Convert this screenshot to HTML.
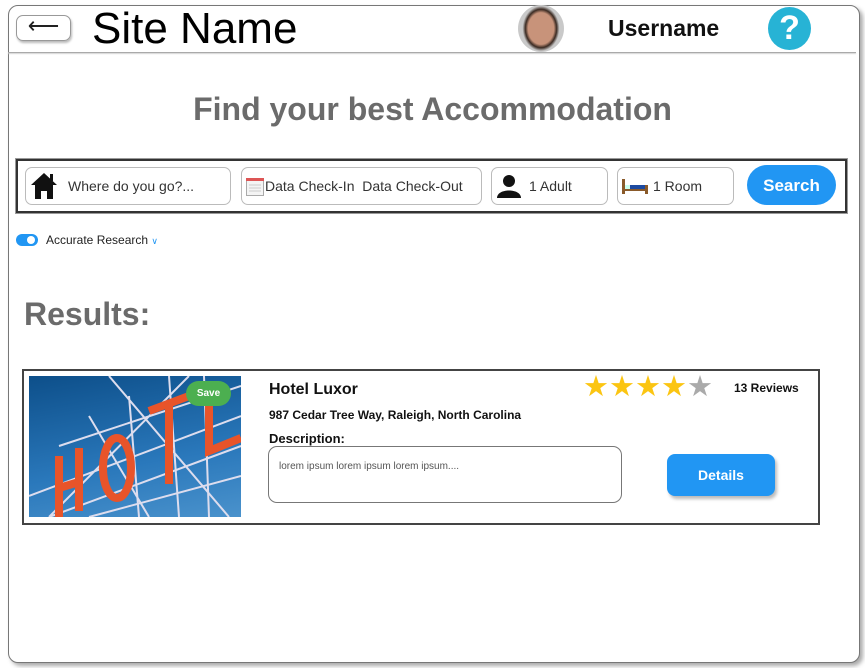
<!DOCTYPE html>
<html><head><meta charset="utf-8"><style>
*{box-sizing:border-box;margin:0;padding:0}
body{width:865px;height:668px;background:#fff;position:relative;overflow:hidden;font-family:"Liberation Sans",sans-serif}
.frame{position:absolute;left:8px;top:5px;width:852px;height:658px;border:1px solid #777;border-radius:10px;box-shadow:3px 3px 4px #aaa;background:#fff}
.abs{position:absolute}
.hline{position:absolute;left:8px;top:52px;width:848px;height:1px;background:#aaa;box-shadow:0 1px 1px #ccc}
.back{left:16px;top:15px;width:55px;height:26px;border:1px solid #999;border-radius:7px;box-shadow:1px 2px 2px #bbb;font-size:22px;line-height:20px;text-align:center;color:#222}
.field{position:absolute;top:167px;height:38px;border:1px solid #bbb;border-radius:7px;font-size:14px;color:#333;line-height:36px}
.star{font-size:29px;line-height:27px;color:#fbc512}
</style></head><body>
<div class="frame"></div>
<div class="hline"></div>
<div class="abs back">⟵</div>
<div class="abs" style="left:92px;top:4px;font-size:44px;color:#000">Site Name</div>
<div class="abs" style="left:518px;top:5px;width:46px;height:47px;border-radius:50%;background:radial-gradient(ellipse 40% 48% at 50% 50%,#c8937a 0 70%,#3a2a22 85%,#c9c9c9 100%);"></div>
<div class="abs" style="left:608px;top:15px;font-size:23px;font-weight:bold;color:#111">Username</div>
<div class="abs" style="left:768px;top:7px;width:43px;height:43px;border-radius:50%;background:#27b3d5;color:#fff;font-size:34px;font-weight:bold;text-align:center;line-height:43px">?</div>

<div class="abs" style="left:0;width:865px;top:91px;text-align:center;font-size:32px;font-weight:bold;color:#6b6b6b">Find your best Accommodation</div>

<div class="abs" style="left:16px;top:159px;width:831px;height:54px;border:2px solid #333;box-shadow:0 0 0 1px #999"></div>
<div class="field" style="left:25px;width:206px;padding-left:42px">Where do you go?...
<svg class="abs" style="left:4px;top:4px" width="28" height="27" viewBox="0 0 28 27"><path d="M14 1 L1 13 H5 V27 H11 V19 H17 V27 H23 V13 H27 Z" fill="#111"/><rect x="20" y="2" width="3" height="7" fill="#111"/></svg></div>
<div class="field" style="left:241px;width:241px;padding-left:23px">Data Check-In&nbsp; Data Check-Out
<svg class="abs" style="left:4px;top:10px" width="18" height="18"><rect x="0.5" y="0.5" width="17" height="17" fill="#f4f4f4" stroke="#aaa"/><rect x="0" y="0" width="18" height="3" fill="#d55"/><path d="M3 7h12M3 10h12M3 13h12" stroke="#ccc"/></svg></div>
<div class="field" style="left:491px;width:117px;padding-left:37px">1 Adult
<svg class="abs" style="left:5px;top:6px" width="24" height="24" viewBox="0 0 24 24"><circle cx="12" cy="7" r="6" fill="#111"/><path d="M0 24 C0 14 24 14 24 24Z" fill="#111"/></svg></div>
<div class="field" style="left:617px;width:117px;padding-left:35px">1 Room
<svg class="abs" style="left:4px;top:11px" width="26" height="15"><rect x="0" y="0" width="3" height="15" fill="#8a5a2a"/><rect x="23" y="6" width="3" height="9" fill="#8a5a2a"/><rect x="3" y="6" width="6" height="4" fill="#cfe"/><rect x="8" y="6" width="15" height="6" fill="#1d4aa0"/><rect x="3" y="10" width="20" height="2" fill="#8a5a2a"/></svg></div>
<div class="abs" style="left:747px;top:165px;width:89px;height:40px;border-radius:20px;background:#2196f3;color:#fff;font-weight:bold;font-size:17px;text-align:center;line-height:42px">Search</div>

<div class="abs" style="left:16px;top:234px;width:22px;height:12px;border-radius:6px;background:#2196f3"></div>
<div class="abs" style="left:27px;top:236px;width:8px;height:8px;border-radius:50%;background:#fff"></div>
<div class="abs" style="left:46px;top:233px;font-size:12px;color:#222">Accurate Research <span style="color:#2196f3;font-size:9px">&#8744;</span></div>

<div class="abs" style="left:24px;top:296px;font-size:32px;font-weight:bold;color:#6b6b6b">Results:</div>

<div class="abs" style="left:22px;top:369px;width:798px;height:156px;border:2px solid #444"></div>
<div class="abs" style="left:29px;top:376px;width:212px;height:141px;overflow:hidden;background:linear-gradient(170deg,#0d4f8a,#2a78bb 60%,#4a92cc)">
<svg width="212" height="141" viewBox="0 0 212 141">
<g stroke="#dde" stroke-width="2" fill="none"><path d="M0 120 L212 40 M20 141 L212 70 M60 141 L212 100 M30 70 L212 10 M80 0 L200 141 M140 0 L150 141 M175 0 L180 141 M100 20 L110 141 M60 40 L120 141 M20 141 L160 0"/></g>
<g fill="none" stroke="#e8542a" stroke-width="8"><path d="M30 80 V141 M50 72 V135 M30 112 L50 106"/><ellipse cx="88" cy="92" rx="14" ry="30"/><path d="M120 35 L160 20 M140 28 V108"/><path d="M180 10 V75 L212 62"/></g></svg></div>
<div class="abs" style="left:186px;top:381px;width:45px;height:25px;border-radius:13px;background:#4caf50;color:#fff;font-size:10px;font-weight:bold;text-align:center;line-height:25px">Save</div>
<div class="abs" style="left:269px;top:381px;font-size:16px;font-weight:bold;color:#111">Hotel Luxor</div>
<div class="abs" style="left:269px;top:408px;font-size:12px;font-weight:bold;color:#111">987 Cedar Tree Way, Raleigh, North Carolina</div>
<div class="abs" style="left:269px;top:431px;font-size:13px;font-weight:bold;color:#111">Description:</div>
<div class="abs" style="left:268px;top:446px;width:354px;height:57px;border:1px solid #777;border-radius:9px;font-size:10px;color:#555;padding:14px 0 0 10px">lorem ipsum lorem ipsum lorem ipsum....</div>
<div class="abs" style="left:583px;top:374px"><span class="star">★★★★</span><span class="star" style="color:#aaa">★</span></div>
<div class="abs" style="left:734px;top:381px;font-size:12px;font-weight:bold;color:#111">13 Reviews</div>
<div class="abs" style="left:667px;top:454px;width:108px;height:42px;border-radius:8px;background:#2196f3;color:#fff;font-weight:bold;font-size:14px;text-align:center;line-height:42px;box-shadow:2px 3px 3px #bbb">Details</div>
</body></html>
